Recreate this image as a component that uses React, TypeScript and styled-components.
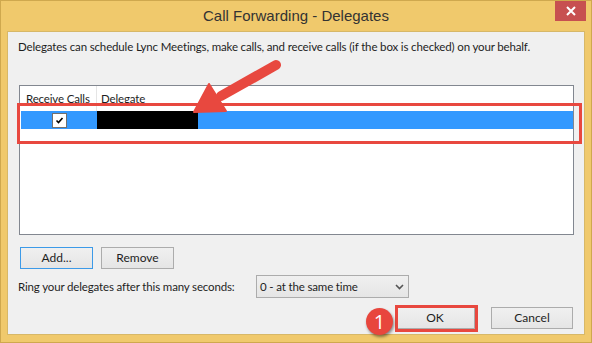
import React from 'react';
import styled, { createGlobalStyle } from 'styled-components';

const Global = createGlobalStyle`
	html, body {
		margin: 0;
		padding: 0;
		background: #ffffff;
	}
	* {
		box-sizing: border-box;
	}
`;

const TITLE_FONT = `"Liberation Sans", Arial, sans-serif`;
const UI_FONT = `Lato, "Liberation Sans", sans-serif`;
const RED = '#e8483f';

const Window = styled.div`
	position: relative;
	width: 592px;
	height: 343px;
	background: #f0c96c;
	border: 1px solid #cfa84e;
	padding: 0 6px 7px 6px;
	display: flex;
	flex-direction: column;
	font-family: ${UI_FONT};
	color: #1e1e1e;
	overflow: hidden;
`;

const TitleBar = styled.div`
	height: 30px;
	display: flex;
	align-items: center;
	position: relative;
`;

const Title = styled.div`
	flex: 1;
	text-align: center;
	font-family: ${TITLE_FONT};
	font-size: 15px;
	color: #333333;
	padding-bottom: 1px;
`;

const CloseButton = styled.div`
	position: absolute;
	top: -1px;
	right: -1px;
	width: 31px;
	height: 21px;
	background: #c75050;
	display: flex;
	align-items: center;
	justify-content: center;
`;

const Client = styled.div`
	flex: 1;
	background: #f0f0f0;
	border: 1px solid #d7b868;
	padding: 7px 10px 0 10px;
	display: flex;
	flex-direction: column;
	font-size: 11.5px;
	letter-spacing: -0.15px;
	white-space: nowrap;
`;

const Intro = styled.div`
	line-height: 16px;
`;

const ListBox = styled.div`
	margin: 30px 0 0 1px;
	height: 150px;
	width: 555px;
	background: #ffffff;
	border: 1px solid #828790;
	padding: 0 0 0 1px;
	display: flex;
	flex-direction: column;
`;

const HeaderRow = styled.div`
	height: 25px;
	display: flex;
	align-items: center;
`;

const HeaderCell = styled.div<{ $w?: number }>`
	width: ${p => (p.$w ? `${p.$w}px` : 'auto')};
	flex: ${p => (p.$w ? 'none' : '1')};
	height: 100%;
	display: flex;
	align-items: center;
	padding-left: ${p => (p.$w ? 5 : 4)}px;
	border-right: ${p => (p.$w ? '1px solid #e5e5e5' : 'none')};
	color: #1e1e1e;
`;

const Row = styled.div<{ $selected?: boolean }>`
	height: 18px;
	display: flex;
	align-items: stretch;
	background: ${p => (p.$selected ? '#3399ff' : 'transparent')};
`;

const CheckCell = styled.div`
	width: 76px;
	display: flex;
	align-items: center;
	justify-content: center;
`;

const CheckBox = styled.div`
	width: 15px;
	height: 15px;
	background: #ffffff;
	border: 1px solid #707070;
	display: flex;
	align-items: center;
	justify-content: center;
`;

const Redacted = styled.div`
	width: 101px;
	background: #000000;
`;

const ButtonRow = styled.div<{ $justify?: string; $top: number }>`
	display: flex;
	gap: ${p => (p.$justify ? 16 : 8)}px;
	justify-content: ${p => p.$justify ?? 'flex-start'};
	margin-top: ${p => p.$top}px;
	padding-left: 2px;
	padding-right: 1px;
`;

const Button = styled.button<{ $focused?: boolean; $w: number }>`
	width: ${p => p.$w}px;
	height: 22px;
	font-family: ${UI_FONT};
	font-size: 12px;
	color: #1e1e1e;
	background: linear-gradient(#f0f0f0, #e5e5e5);
	border: 1px solid ${p => (p.$focused ? '#3c9ae8' : '#acacac')};
	padding: 0;
	line-height: 18px;
`;

const RingRow = styled.div`
	display: flex;
	align-items: center;
	margin-top: 6px;
`;

const RingLabel = styled.div`
	width: 238px;
`;

const Select = styled.div`
	width: 153px;
	height: 23px;
	border: 1px solid #acacac;
	background: linear-gradient(#f0f0f0, #e5e5e5);
	display: flex;
	align-items: center;
	justify-content: space-between;
	padding: 0 4px 0 3px;
`;

const Highlight = styled.div`
	position: absolute;
	border: 3px solid ${RED};
`;

const Arrow = styled.svg`
	position: absolute;
	left: 180px;
	top: 50px;
`;

const Badge = styled.div`
	position: absolute;
	left: 365px;
	top: 307px;
	width: 27px;
	height: 27px;
	border-radius: 50%;
	background: #e8463d;
	color: #ffffff;
	font-family: "Open Sans", sans-serif;
	font-size: 20px;
	display: flex;
	align-items: center;
	justify-content: center;
	box-shadow: 1px 2px 3px rgba(0, 0, 0, 0.45);
`;

export default function App() {
	return (
		<>
			<Global />
			<Window>
				<TitleBar>
					<Title>Call Forwarding - Delegates</Title>
					<CloseButton>
						<svg width="10" height="10" viewBox="0 0 10 10">
							<path d="M1 1 L9 9 M9 1 L1 9" stroke="#ffffff" strokeWidth="2" />
						</svg>
					</CloseButton>
				</TitleBar>
				<Client>
					<Intro>
						Delegates can schedule Lync Meetings, make calls, and receive calls (if the box is checked) on your behalf.
					</Intro>
					<ListBox>
						<HeaderRow>
							<HeaderCell $w={76}>Receive Calls</HeaderCell>
							<HeaderCell>Delegate</HeaderCell>
						</HeaderRow>
						<Row $selected>
							<CheckCell>
								<CheckBox>
									<svg width="11" height="11" viewBox="0 0 11 11">
										<path d="M2.5 5.5 L4.5 7.5 L8.5 3" stroke="#000" strokeWidth="1.6" fill="none" />
									</svg>
								</CheckBox>
							</CheckCell>
							<Redacted />
						</Row>
					</ListBox>
					<ButtonRow $top={12}>
						<Button $w={73} $focused>Add...</Button>
						<Button $w={73}>Remove</Button>
					</ButtonRow>
					<RingRow>
						<RingLabel>Ring your delegates after this many seconds:</RingLabel>
						<Select>
							<span>0 - at the same time</span>
							<svg width="9" height="6" viewBox="0 0 9 6">
								<path d="M1 1 L4.5 4.5 L8 1" stroke="#555" strokeWidth="1.6" fill="none" />
							</svg>
						</Select>
					</RingRow>
					<ButtonRow $top={9} $justify="flex-end">
						<Button $w={80}>OK</Button>
						<Button $w={82}>Cancel</Button>
					</ButtonRow>
				</Client>
				<Highlight style={{ left: 16, top: 102, width: 565, height: 41 }} />
				<Highlight style={{ left: 394, top: 304, width: 83, height: 27 }} />
				<Arrow width="110" height="70" viewBox="0 0 110 70">
					<line x1="95" y1="14" x2="40" y2="45" stroke={RED} strokeWidth="10" strokeLinecap="round" />
					<polygon points="13,61 28,33 45,60" fill={RED} stroke={RED} strokeWidth="2" strokeLinejoin="round" />
				</Arrow>
				<Badge>1</Badge>
			</Window>
		</>
	);
}
